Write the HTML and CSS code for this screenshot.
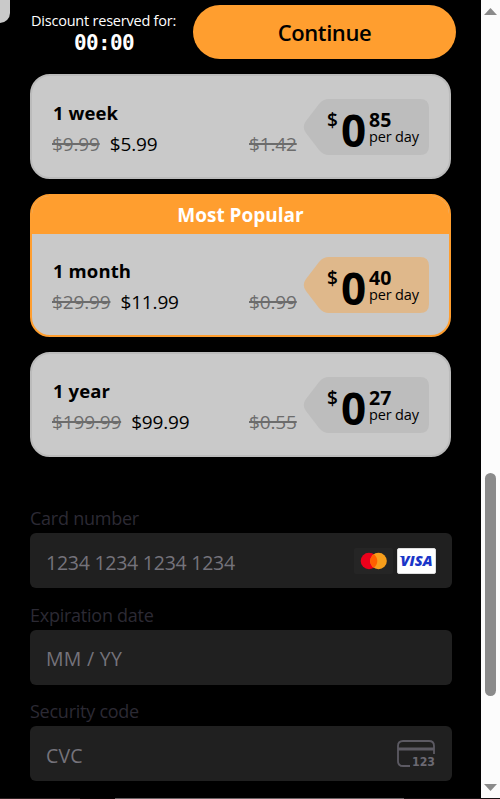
FILE: index.html
```html
<!DOCTYPE html>
<html lang="en">
<head>
    <meta charset="UTF-8">
    <meta name="viewport" content="width=device-width, initial-scale=1.0">
    <title>Checkout</title>
    <link rel="stylesheet" href="styles.css">
</head>
<body>
    <div class="page">
        <div class="corner"></div>

        <!-- Discount timer and main button -->
        <header class="topbar">
            <div class="timer">
                <div class="timer-label">Discount reserved for:</div>
                <div class="timer-value">00:00</div>
            </div>
            <button class="continue">Continue</button>
        </header>

        <!-- Plans -->
        <div class="plans">
            <div class="plan">
                <div class="plan-body">
                    <div class="plan-info">
                        <div class="plan-title">1 week</div>
                        <div class="plan-price"><s>$9.99</s><span>$5.99</span></div>
                    </div>
                    <s class="day-old">$1.42</s>
                    <div class="tag">
                        <svg class="tag-shape" viewBox="0 0 126 56"><path d="M26 0H117Q126 0 126 9V47Q126 56 117 56H26Q20 56 16 51L3 34Q-1.500 28 3 22L16 5Q20 0 26 0Z"/></svg>
                        <span class="currency">$</span>
                        <span class="whole">0</span>
                        <div class="rest"><b>85</b><span>per day</span></div>
                    </div>
                </div>
            </div>

            <div class="plan popular">
                <div class="banner">Most Popular</div>
                <div class="plan-body">
                    <div class="plan-info">
                        <div class="plan-title">1 month</div>
                        <div class="plan-price"><s>$29.99</s><span>$11.99</span></div>
                    </div>
                    <s class="day-old">$0.99</s>
                    <div class="tag">
                        <svg class="tag-shape" viewBox="0 0 126 56"><path d="M26 0H117Q126 0 126 9V47Q126 56 117 56H26Q20 56 16 51L3 34Q-1.500 28 3 22L16 5Q20 0 26 0Z"/></svg>
                        <span class="currency">$</span>
                        <span class="whole">0</span>
                        <div class="rest"><b>40</b><span>per day</span></div>
                    </div>
                </div>
            </div>

            <div class="plan">
                <div class="plan-body">
                    <div class="plan-info">
                        <div class="plan-title">1 year</div>
                        <div class="plan-price"><s>$199.99</s><span>$99.99</span></div>
                    </div>
                    <s class="day-old">$0.55</s>
                    <div class="tag">
                        <svg class="tag-shape" viewBox="0 0 126 56"><path d="M26 0H117Q126 0 126 9V47Q126 56 117 56H26Q20 56 16 51L3 34Q-1.500 28 3 22L16 5Q20 0 26 0Z"/></svg>
                        <span class="currency">$</span>
                        <span class="whole">0</span>
                        <div class="rest"><b>27</b><span>per day</span></div>
                    </div>
                </div>
            </div>
        </div>

        <!-- Card form -->
        <form class="card-form">
            <label for="number">Card number</label>
            <div class="field">
                <input type="text" id="number" class="number" placeholder="1234 1234 1234 1234">
                <svg width="39" height="26" viewBox="0 0 39 26">
                    <rect width="39" height="26" rx="2" fill="#252525"/>
                    <circle cx="15" cy="13" r="8.300" fill="#eb001b"/>
                    <circle cx="24.500" cy="13" r="8.300" fill="#f79e1b"/>
                    <path d="M19.750 6.200a8.300 8.300 0 0 1 0 13.600a8.300 8.300 0 0 1 0-13.600Z" fill="#ff5f00"/>
                </svg>
                <svg width="39" height="26" viewBox="0 0 39 26">
                    <rect x=".5" y=".5" width="38" height="25" rx="1.500" fill="#fff" stroke="#ddd"/>
                    <path d="M2.500 8H6L7.500 10.500L5.500 10Z" fill="#1a35c8"/>
                    <text x="3.500" y="18" class="visa" textLength="32" lengthAdjust="spacingAndGlyphs">VISA</text>
                </svg>
            </div>

            <label for="expiry">Expiration date</label>
            <div class="field">
                <input type="text" id="expiry" class="expiry" placeholder="MM / YY">
            </div>

            <label for="cvc">Security code</label>
            <div class="field">
                <input type="text" id="cvc" class="cvc" placeholder="CVC">
                <svg class="cvc-icon" width="39" height="28" viewBox="0 0 39 28">
                    <path d="M13 26H6Q1 26 1 21V6Q1 1 6 1H32Q37 1 37 6V14" fill="none" stroke="#5c5a63" stroke-width="1.800"/>
                    <path d="M1 7.500H37V10.500H1Z" fill="#5c5a63"/>
                    <text x="15" y="26" class="digits" textLength="23" lengthAdjust="spacingAndGlyphs">123</text>
                </svg>
            </div>
        </form>
        <div class="bottom-line"></div>
    </div>

    <div class="scrollbar">
        <svg width="13" height="7" viewBox="0 0 13 7"><path d="M6.500 0L13 7H0Z"/></svg>
        <div class="thumb"></div>
        <svg width="13" height="7" viewBox="0 0 13 7"><path d="M0 0H13L6.500 7Z"/></svg>
    </div>
</body>
</html>
```

FILE: styles.css
```css
* {
    box-sizing: border-box;
}
body {
    margin: 0;
    display: flex;
    height: 799px;
    overflow: hidden;
    background-color: #000;
    font-family: "Open Sans", "Noto Sans", sans-serif;
    color: #000;
}
.page {
    position: relative;
    width: 481px;
    height: 799px;
    display: flex;
    flex-direction: column;
}
.corner {
    position: absolute;
    left: 0;
    top: 0;
    width: 10px;
    height: 23px;
    background-color: #c9c9c9;
    border-bottom-right-radius: 10px;
}
/* Top bar */
.topbar {
    display: flex;
    padding: 5px 0 0 30px;
    height: 74px;
}
.timer {
    width: 163px;
    color: #fff;
    padding-top: 5px;
}
.timer-label {
    font-size: 14.5px;
    line-height: 21px;
    letter-spacing: -0.22px;
    padding-left: 1px;
    white-space: nowrap;
}
.timer-value {
    width: 148px;
    text-align: center;
    font-family: "DejaVu Sans Mono", monospace;
    font-weight: bold;
    font-size: 21px;
    line-height: 25px;
    letter-spacing: -0.6px;
}
.continue {
    width: 263px;
    height: 54px;
    border: none;
    border-radius: 27px;
    background-color: #ff9e2f;
    font-family: inherit;
    font-size: 22px;
    font-weight: 600;
    letter-spacing: -0.4px;
    color: #000;
    padding: 0;
}
/* Plans */
.plans {
    display: flex;
    flex-direction: column;
    gap: 15px;
    padding-left: 30px;
}
.plan {
    width: 421px;
    background-color: #c9c9c9;
    border: 2px solid #bbb;
    border-radius: 20px;
    overflow: hidden;
}
.popular {
    border-color: #ff9e2f;
}
.banner {
    height: 38px;
    background-color: #ff9e2f;
    color: #fff;
    font-weight: bold;
    font-size: 19px;
    line-height: 38px;
    text-align: center;
}
.plan-body {
    display: flex;
    height: 101px;
    padding: 23px 20px 0 20px;
}
.plan-info {
    width: 197px;
}
.plan-title {
    font-size: 18.5px;
    font-weight: bold;
    line-height: 27px;
    padding-left: 1px;
    letter-spacing: 0.1px;
}
.plan-price {
    display: flex;
    gap: 10px;
    padding-top: 2px;
    font-size: 19px;
    line-height: 32px;
    letter-spacing: -0.15px;
}
.plan s {
    color: #6c6c6c;
    text-decoration-thickness: 2px;
}
.day-old {
    width: 54px;
    padding-top: 30px;
    font-size: 19px;
    line-height: 31px;
    letter-spacing: -0.15px;
}
/* Price per day tag */
.tag {
    position: relative;
    display: flex;
    width: 126px;
    height: 56px;
    padding-left: 24px;
}
.tag-shape {
    position: absolute;
    left: 0;
    top: 0;
    width: 126px;
    height: 56px;
    fill: #bdbdbd;
}
.popular .tag-shape {
    fill: #dfb88b;
}
.currency, .whole, .rest {
    position: relative;
}
.currency {
    width: 14px;
    font-size: 19px;
    font-weight: 600;
    line-height: 42px;
}
.whole {
    width: 28px;
    font-size: 44px;
    font-weight: bold;
    line-height: 62px;
}
.rest {
    display: flex;
    flex-direction: column;
    padding-top: 11px;
    white-space: nowrap;
}
.rest b {
    font-size: 19.5px;
    line-height: 20px;
    letter-spacing: 0.2px;
}
.rest span {
    font-size: 14.5px;
    line-height: 13px;
    letter-spacing: -0.15px;
}
/* Card form */
.card-form {
    padding: 48px 0 0 30px;
}
.card-form label {
    display: block;
    height: 28px;
    line-height: 26px;
    font-size: 18px;
    color: #2c2a34;
    letter-spacing: -0.25px;
}
.field {
    display: flex;
    align-items: center;
    gap: 4px;
    width: 422px;
    height: 55px;
    margin-bottom: 13.5px;
    padding: 0 16px;
    background-color: #202020;
    border-radius: 6px;
}
.field input {
    flex: 1;
    min-width: 0;
    height: 55px;
    padding: 3px 0 0;
    border: none;
    outline: none;
    background: none;
    font-family: inherit;
    font-size: 19.5px;
    letter-spacing: -0.25px;
}
.field .expiry {
    letter-spacing: 0.3px;
}
.field .cvc {
    letter-spacing: 0.2px;
}
.field input::placeholder {
    color: #75737b;
    opacity: 1;
}
.cvc-icon {
    overflow: visible;
}
.visa {
    font-family: "Open Sans", sans-serif;
    font-weight: 800;
    font-style: italic;
    font-size: 14px;
    fill: #1a35c8;
}
.digits {
    font-family: "DejaVu Sans", sans-serif;
    font-weight: bold;
    font-size: 12.5px;
    fill: #6b6972;
}
.bottom-line {
    position: absolute;
    left: 0;
    bottom: 0;
    width: 481px;
    height: 1px;
    background: linear-gradient(to right, #2b2122 0 80px, #0c0506 80px 115px, #696365 115px 404px, #181113 404px);
}
/* Scrollbar */
.scrollbar {
    display: flex;
    flex-direction: column;
    align-items: center;
    width: 19px;
    height: 799px;
    padding-top: 8px;
    background-color: #fcfcfc;
    border-bottom: 1px solid #181113;
}
.scrollbar svg {
    fill: #8b8b8b;
}
.thumb {
    width: 11px;
    height: 223px;
    margin: 458px 0 88px;
    border-radius: 6px;
    background-color: #8b8b8b;
}
```
